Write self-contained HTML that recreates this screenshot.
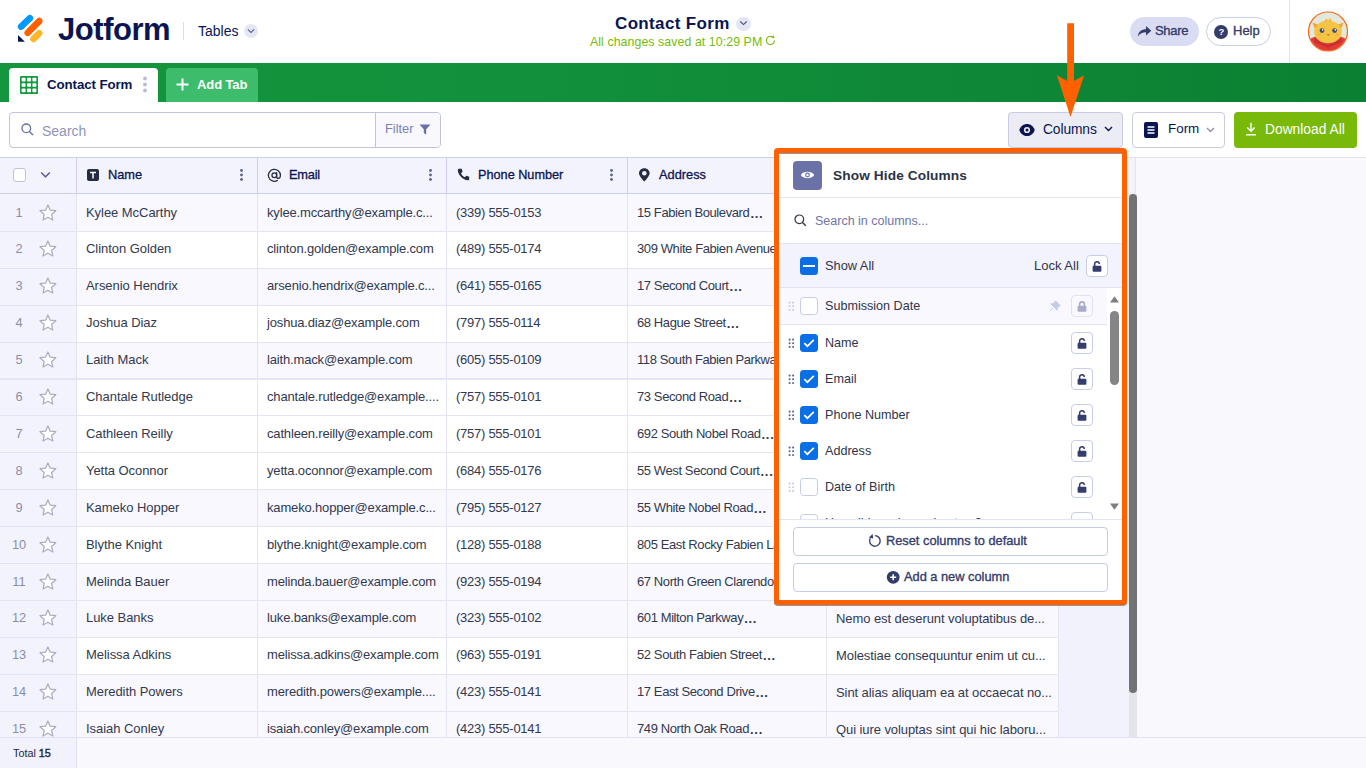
<!DOCTYPE html>
<html><head><meta charset="utf-8">
<style>
*{box-sizing:border-box;margin:0;padding:0}
html,body{width:1366px;height:768px;overflow:hidden;background:#fff;font-family:"Liberation Sans",sans-serif;color:#0a1551}
.abs{position:absolute}
.t{position:absolute;white-space:nowrap;line-height:1}
/* header */
#hdr{position:absolute;left:0;top:0;width:1366px;height:63px;background:#fff}
#green{position:absolute;left:0;top:63px;width:1366px;height:39px;background:linear-gradient(90deg,#15953d 0%,#12903b 40%,#0b8032 100%)}
.tab{position:absolute;top:68px;height:34px;border-radius:4px 4px 0 0}
/* toolbar */
.btn{position:absolute;border-radius:4px}
/* table */
#thead{position:absolute;left:0;top:157px;width:1059px;height:37px;background:#f3f3fd;border-top:1px solid #cdd0ec;border-bottom:1.5px solid #cdd0ec}
.hc{position:absolute;top:0;height:35px}
.vsep{position:absolute;width:1px;background:#dfe1f3}
.row{position:absolute;left:0;width:1058px;border-bottom:1px solid #e3e5f4}
.c0{position:absolute;left:0;top:0;width:77px;height:100%;background:#f3f3fd;border-right:1px solid #e0e2f3}
.num{position:absolute;left:0;width:38px;text-align:center;font-size:12.8px;color:#8a8fa9;line-height:13px}
.star{position:absolute;left:39px;top:10px}
.cell{position:absolute;top:0;height:100%;font-size:13px;letter-spacing:-0.12px;color:#33394e;line-height:13px;white-space:nowrap;overflow:hidden;border-right:1px solid #e3e5f4}
.tx{position:absolute;left:9px}
.el{letter-spacing:0.7px;position:relative;top:1px;margin-left:1px;font-weight:bold}
/* panel */
#frame{position:absolute;left:774px;top:148px;width:353px;height:457px;border:5px solid #ff6100;border-radius:4px;background:#fff;box-shadow:0 1px 0 rgba(70,70,90,0.55)}
.pt{position:absolute;white-space:nowrap;line-height:1;color:#2f3549}
.cb{position:absolute;width:18px;height:18px;border-radius:3.5px}
.cbon{background:#0a6fe5}
.cboff{background:#fff;border:1px solid #c6cbe9}
.lockb{position:absolute;width:22px;height:22px;border:1px solid #c8cdec;border-radius:4px;background:#fff}
.drag{position:absolute;width:7px;height:10px}
</style></head><body>

<!-- ============ HEADER ============ -->
<div id="hdr">
  <svg class="abs" style="left:14px;top:12px" width="34" height="34" viewBox="0 0 34 34">
    <path d="M15.9 6.2 L7.1 14.6" stroke="#0099ff" stroke-width="6.6" stroke-linecap="round"/>
    <path d="M25.2 9.1 L13.7 20.8" stroke="#ff6100" stroke-width="6.6" stroke-linecap="round"/>
    <path d="M25.2 21.2 L19.5 27" stroke="#ffb629" stroke-width="6.6" stroke-linecap="round"/>
    <path d="M4 23 L4 29.7 L10.9 29.7 Z" fill="#0a1551"/>
  </svg>
  <div class="t" style="left:58px;top:14px;font-size:31px;font-weight:bold;letter-spacing:-0.45px;color:#0a1551">Jotform</div>
  <div class="abs" style="left:183px;top:22px;width:1px;height:18px;background:#d8dbf0"></div>
  <div class="t" style="left:198px;top:24px;font-size:14px;color:#0a1551">Tables</div>
  <div class="abs" style="left:244px;top:24px;width:14px;height:14px;border-radius:50%;background:#e4e6f5"></div>
  <svg class="abs" style="left:247px;top:28px" width="8" height="6" viewBox="0 0 8 6"><path d="M0.8 1.3 L4 4.5 L7.2 1.3" fill="none" stroke="#5a6190" stroke-width="1.1"/></svg>

  <div class="t" style="left:615px;top:15px;font-size:17px;font-weight:bold;letter-spacing:0.35px;color:#0a1551">Contact Form</div>
  <div class="abs" style="left:736px;top:17px;width:15px;height:14px;border-radius:50%;background:#e4e6f5"></div>
  <svg class="abs" style="left:739px;top:20px" width="9" height="6" viewBox="0 0 9 6"><path d="M1.3 1.5 L4.5 4.6 L7.7 1.5" fill="none" stroke="#4a5070" stroke-width="1.1"/></svg>
  <div class="t" style="left:590px;top:36px;font-size:12.4px;letter-spacing:0.05px;color:#78bb0a">All changes saved at 10:29 PM</div>
  <svg class="abs" style="left:765px;top:35px" width="11" height="11" viewBox="0 0 11 11"><path d="M9.5 5.4 A4.1 4.1 0 1 1 7.45 1.85" fill="none" stroke="#78bb0a" stroke-width="1.1"/><path d="M8.9 0.2 L9.3 3.4 L6.2 2.6Z" fill="#78bb0a"/></svg>

  <div class="abs" style="left:1130px;top:17px;width:69px;height:29px;border-radius:14.5px;background:#dadcf3"></div>
  <svg class="abs" style="left:1137px;top:25px" width="15" height="12" viewBox="0 0 15 12"><path d="M0.8 11.5 C1.5 6.5 4.5 4.2 9 4.2 L9 1 L14.3 5.8 L9 10.4 L9 7.2 C5.4 7.2 3 8.4 0.8 11.5Z" fill="#343c6a"/></svg>
  <div class="t" style="left:1155px;top:24px;font-size:13px;letter-spacing:-0.3px;color:#343c6a;-webkit-text-stroke:0.35px #343c6a">Share</div>
  <div class="abs" style="left:1206px;top:17px;width:65px;height:29px;border-radius:14.5px;border:1px solid #c9cdef;background:#fff"></div>
  <div class="abs" style="left:1214px;top:24.5px;width:14px;height:14px;border-radius:50%;background:#343c6a"></div>
  <div class="t" style="left:1214.5px;top:26.5px;width:14px;text-align:center;font-size:9.5px;font-weight:bold;color:#fff">?</div>
  <div class="t" style="left:1233px;top:24px;font-size:13px;letter-spacing:0px;color:#343c6a;-webkit-text-stroke:0.35px #343c6a">Help</div>
  <div class="abs" style="left:1289px;top:0;width:1px;height:63px;background:#e1e3f4"></div>
  <svg class="abs" style="left:1307px;top:11px" width="42" height="42" viewBox="0 0 42 42">
    <defs><clipPath id="avc"><circle cx="21" cy="20.5" r="19.5"/></clipPath></defs>
    <circle cx="21" cy="20.5" r="19.5" fill="#e4e8dc"/>
    <g clip-path="url(#avc)">
      <path d="M0 42 L1 30 Q4 26 10 25.5 L32 25.5 Q38 26 41 30 L42 42Z" fill="#e23b3a"/>
      <path d="M8 27 L21 34 L34 27 L35 31 L21 37 L7 31Z" fill="#c92f2e"/>
      <path d="M5.5 11.5 L13 14.5 L9 21Z" fill="#f0a238"/>
      <path d="M36.5 11.5 L29 14.5 L33 21Z" fill="#f0a238"/>
      <ellipse cx="21" cy="21" rx="13.8" ry="11.2" fill="#f6c445"/>
      <path d="M17 10.5 L19.5 7.5 L21 10 L23 7 L25 10.5Z" fill="#f3b73c"/>
      <circle cx="15" cy="19.6" r="2.4" fill="#3f4a6e"/>
      <circle cx="27.6" cy="19.6" r="2.4" fill="#3f4a6e"/>
      <circle cx="15.7" cy="18.9" r="0.8" fill="#fff"/>
      <circle cx="28.3" cy="18.9" r="0.8" fill="#fff"/>
      <path d="M19.6 23.6 Q21.3 25.6 23 23.6Z" fill="#9a4a22"/>
      <ellipse cx="12" cy="23.5" rx="1.8" ry="1" fill="#f2a54a" opacity="0.7"/>
      <ellipse cx="30.5" cy="23.5" rx="1.8" ry="1" fill="#f2a54a" opacity="0.7"/>
    </g>
    <circle cx="21" cy="20.5" r="19.5" fill="none" stroke="#f26a1b" stroke-width="1.2"/>
  </svg>
</div>

<!-- ============ GREEN BAR ============ -->
<div id="green"></div>
<div class="tab" style="left:9px;width:149px;background:#fff"></div>
<svg class="abs" style="left:20px;top:76px" width="18" height="18" viewBox="0 0 18 18">
  <rect x="0" y="0" width="18" height="18" rx="1" fill="#149a3f"/>
  <g fill="#fff">
    <rect x="1.6" y="1.8" width="4" height="3.6" rx="0.8"/><rect x="7" y="1.8" width="4" height="3.6" rx="0.8"/><rect x="12.4" y="1.8" width="4" height="3.6" rx="0.8"/>
    <rect x="1.6" y="7.2" width="4" height="3.6" rx="0.8"/><rect x="7" y="7.2" width="4" height="3.6" rx="0.8"/><rect x="12.4" y="7.2" width="4" height="3.6" rx="0.8"/>
    <rect x="1.6" y="12.6" width="4" height="3.6" rx="0.8"/><rect x="7" y="12.6" width="4" height="3.6" rx="0.8"/><rect x="12.4" y="12.6" width="4" height="3.6" rx="0.8"/>
  </g>
</svg>
<div class="t" style="left:47px;top:78px;font-size:13.3px;font-weight:bold;letter-spacing:-0.1px;color:#0a1551">Contact Form</div>
<svg class="abs" style="left:142px;top:76px" width="6" height="18" viewBox="0 0 6 18"><circle cx="3" cy="2.5" r="1.9" fill="#b9bbd3"/><circle cx="3" cy="8.5" r="1.9" fill="#b9bbd3"/><circle cx="3" cy="14.5" r="1.9" fill="#b9bbd3"/></svg>
<div class="tab" style="left:166px;width:92px;background:#3dbd6b"></div>
<svg class="abs" style="left:176px;top:78px" width="13" height="13" viewBox="0 0 13 13"><path d="M6.5 0.5 V12.5 M0.5 6.5 H12.5" stroke="#fff" stroke-width="2"/></svg>
<div class="t" style="left:197px;top:78px;font-size:13px;font-weight:bold;letter-spacing:-0.1px;color:#fff">Add Tab</div>

<!-- ============ TOOLBAR ============ -->
<div class="abs" style="left:9px;top:112px;width:432px;height:36px;border:1.3px solid #bfc3dc;border-radius:4px;background:#fff;overflow:hidden">
  <div class="abs" style="left:365px;top:0;width:67px;height:36px;background:#f9f9fd;border-left:1.3px solid #bfc3dc"></div>
</div>
<svg class="abs" style="left:21px;top:123px" width="13" height="13" viewBox="0 0 13 13"><circle cx="5.3" cy="5.3" r="4.3" fill="none" stroke="#6b71a0" stroke-width="1.3"/><path d="M8.4 8.4 L12 12" stroke="#6b71a0" stroke-width="1.4"/></svg>
<div class="t" style="left:42px;top:124px;font-size:14px;color:#8f94b8">Search</div>
<div class="t" style="left:385px;top:123px;font-size:12.8px;color:#7a82b2">Filter</div>
<svg class="abs" style="left:419px;top:124px" width="12" height="11" viewBox="0 0 12 11"><path d="M0.5 0.5 H11.5 L7.2 5.2 V10.5 L4.8 9 V5.2Z" fill="#6a70a8"/></svg>

<div class="abs" style="left:1008px;top:112px;width:115px;height:36px;border:1px solid #c9cbe0;border-radius:4px;background:#ececf4"></div>
<svg class="abs" style="left:1019px;top:124px" width="16" height="12" viewBox="0 0 16 12"><path d="M0.3 6 C3 -2 13 -2 15.7 6 C13 14 3 14 0.3 6Z" fill="#0a1551"/><circle cx="8" cy="6" r="3.1" fill="#ececf4"/><circle cx="8" cy="6" r="1.5" fill="#0a1551"/></svg>
<div class="t" style="left:1043px;top:123px;font-size:13.8px;letter-spacing:-0.1px;color:#0a1551">Columns</div>
<svg class="abs" style="left:1104px;top:126px" width="9" height="6" viewBox="0 0 9 6"><path d="M1 1 L4.5 4.5 L8 1" fill="none" stroke="#0a1551" stroke-width="1.4"/></svg>

<div class="abs" style="left:1132px;top:112px;width:93px;height:36px;border:1px solid #c9cbe0;border-radius:4px;background:#fff"></div>
<svg class="abs" style="left:1144px;top:122px" width="14" height="16" viewBox="0 0 14 16"><rect x="0" y="0" width="14" height="16" rx="2" fill="#0a1551"/><path d="M3.5 5 H10.5 M3.5 8 H10.5 M3.5 11 H10.5" stroke="#fff" stroke-width="1.4"/></svg>
<div class="t" style="left:1168px;top:122px;font-size:13.4px;color:#0a1551">Form</div>
<svg class="abs" style="left:1206px;top:127px" width="9" height="6" viewBox="0 0 9 6"><path d="M1 1 L4.5 4.5 L8 1" fill="none" stroke="#8a8fb0" stroke-width="1.3"/></svg>

<div class="abs" style="left:1234px;top:112px;width:123px;height:36px;border-radius:4px;background:#78b90a"></div>
<svg class="abs" style="left:1245px;top:122px" width="12" height="14" viewBox="0 0 12 14"><path d="M6 0.8 V9 M2.3 5.5 L6 9.2 L9.7 5.5 M1 12.8 H11" fill="none" stroke="#fff" stroke-width="1.4"/></svg>
<div class="t" style="left:1265px;top:123px;font-size:13.8px;color:#fff">Download All</div>

<!-- ============ TABLE ============ -->
<div class="abs" style="left:1136px;top:157px;width:230px;height:611px;background:#f8f8fd;border-top:1px solid #dfe1f3"></div>
<div class="abs" style="left:1058px;top:194px;width:71px;height:543px;background:#f1f2fb"></div>
<div class="abs" style="left:1059px;top:157px;width:77px;height:37px;background:#f3f3fd;border-top:1px solid #e0e3f5;border-right:1px solid #e0e3f5;border-bottom:1px solid #eceef8"></div>
<div id="thead">
  <div class="hc" style="left:0;width:77px;border-right:1px solid #cdd0ec"></div>
  <div class="hc" style="left:77px;width:181px;border-right:1px solid #cdd0ec"></div>
  <div class="hc" style="left:258px;width:189px;border-right:1px solid #cdd0ec"></div>
  <div class="hc" style="left:447px;width:181px;border-right:1px solid #cdd0ec"></div>
  <div class="hc" style="left:628px;width:199px;border-right:1px solid #cdd0ec"></div>
  <div class="hc" style="left:827px;width:232px;border-right:1px solid #cdd0ec"></div>
  
</div>
<div class="abs" style="left:13px;top:168px;width:13px;height:14px;border:1px solid #bfc3dd;border-radius:3px;background:#fff"></div>
<svg class="abs" style="left:40px;top:171px" width="11" height="8" viewBox="0 0 11 8"><path d="M1.2 1.5 L5.5 5.8 L9.8 1.5" fill="none" stroke="#5e6496" stroke-width="1.6"/></svg>
<svg class="abs" style="left:87px;top:169px" width="12" height="12" viewBox="0 0 12 12"><rect width="12" height="12" rx="2" fill="#262b42"/><path d="M3 3.4 H9 M6 3.4 V9.6" stroke="#fff" stroke-width="1.5"/></svg>
<div class="t" style="left:108px;top:169px;font-size:12.8px;color:#0a1551;-webkit-text-stroke:0.3px #0a1551">Name</div>
<svg class="abs" style="left:239px;top:168px" width="5" height="14" viewBox="0 0 5 14"><circle cx="2.5" cy="2.5" r="1.45" fill="#5e6496"/><circle cx="2.5" cy="7" r="1.45" fill="#5e6496"/><circle cx="2.5" cy="11.5" r="1.45" fill="#5e6496"/></svg>
<svg class="abs" style="left:267px;top:168px" width="15" height="15" viewBox="0 0 15 15"><circle cx="7.3" cy="7.3" r="2.35" fill="none" stroke="#262b42" stroke-width="1.3"/><path d="M9.65 4.6 V8.4 Q9.65 10.3 11.4 10.3 Q13.4 10.3 13.4 7.3 A6 6 0 1 0 10.4 12.5" fill="none" stroke="#262b42" stroke-width="1.3" stroke-linecap="round"/></svg>
<div class="t" style="left:289px;top:169px;font-size:12.8px;color:#0a1551;letter-spacing:-0.2px;-webkit-text-stroke:0.3px #0a1551">Email</div>
<svg class="abs" style="left:428px;top:168px" width="5" height="14" viewBox="0 0 5 14"><circle cx="2.5" cy="2.5" r="1.45" fill="#5e6496"/><circle cx="2.5" cy="7" r="1.45" fill="#5e6496"/><circle cx="2.5" cy="11.5" r="1.45" fill="#5e6496"/></svg>
<svg class="abs" style="left:457px;top:168px" width="13" height="13" viewBox="0 0 13 13"><path d="M2.2 0.8 L4.6 0.8 L5.6 3.8 L4 5.3 C4.8 7.2 6 8.5 7.8 9.3 L9.3 7.7 L12.2 8.7 L12.2 11.2 C12.2 11.9 11.6 12.4 10.9 12.3 C5.8 11.8 1.3 7.3 0.8 2.2 C0.7 1.4 1.3 0.8 2.2 0.8Z" fill="#262b42"/></svg>
<div class="t" style="left:478px;top:169px;font-size:12.7px;color:#0a1551;-webkit-text-stroke:0.3px #0a1551">Phone Number</div>
<svg class="abs" style="left:609px;top:168px" width="5" height="14" viewBox="0 0 5 14"><circle cx="2.5" cy="2.5" r="1.45" fill="#5e6496"/><circle cx="2.5" cy="7" r="1.45" fill="#5e6496"/><circle cx="2.5" cy="11.5" r="1.45" fill="#5e6496"/></svg>
<svg class="abs" style="left:639px;top:168px" width="11" height="14" viewBox="0 0 11 14"><path d="M5.3 0.3 C8.3 0.3 10.6 2.5 10.6 5.3 C10.6 8.3 5.3 13.6 5.3 13.6 C5.3 13.6 0 8.3 0 5.3 C0 2.5 2.3 0.3 5.3 0.3Z" fill="#262b42"/><circle cx="5.3" cy="5.2" r="2.3" fill="#f3f3fd"/></svg>
<div class="t" style="left:659px;top:169px;font-size:12.8px;color:#0a1551;-webkit-text-stroke:0.3px #0a1551">Address</div>

<div id="rows">
<div class="row" style="top:194px;height:38px;background:#f8f8fe;border-bottom-width:1px"><div class="c0"><span class="num" style="top:12px">1</span><svg class="star" style="top:10px" width="18" height="18" viewBox="0 0 18 18"><path d="M8.90 1.00 L11.19 6.14 L16.79 6.74 L12.61 10.51 L13.78 16.01 L8.90 13.20 L4.02 16.01 L5.19 10.51 L1.01 6.74 L6.61 6.14Z" fill="#fff" stroke="#aaadc5" stroke-width="1.25" stroke-linejoin="round"/></svg></div><div class="cell" style="left:77px;width:181px;letter-spacing:-0.05px"><span class="tx" style="top:12px">Kylee McCarthy</span></div><div class="cell" style="left:258px;width:189px;letter-spacing:-0.16px"><span class="tx" style="top:12px">kylee.mccarthy@example.c...</span></div><div class="cell" style="left:447px;width:181px;letter-spacing:-0.26px"><span class="tx" style="top:12px">(339) 555-0153</span></div><div class="cell" style="left:628px;width:199px;letter-spacing:-0.4px"><span class="tx" style="top:12px">15 Fabien Boulevard<span class="el">...</span></span></div><div class="cell" style="left:827px;width:232px;letter-spacing:-0.08px"><span class="tx" style="top:13px"></span></div></div>
<div class="row" style="top:232px;height:37px;background:#ffffff;border-bottom-width:1px"><div class="c0"><span class="num" style="top:10px">2</span><svg class="star" style="top:8px" width="18" height="18" viewBox="0 0 18 18"><path d="M8.90 1.00 L11.19 6.14 L16.79 6.74 L12.61 10.51 L13.78 16.01 L8.90 13.20 L4.02 16.01 L5.19 10.51 L1.01 6.74 L6.61 6.14Z" fill="#fff" stroke="#aaadc5" stroke-width="1.25" stroke-linejoin="round"/></svg></div><div class="cell" style="left:77px;width:181px;letter-spacing:-0.05px"><span class="tx" style="top:10px">Clinton Golden</span></div><div class="cell" style="left:258px;width:189px;letter-spacing:-0.16px"><span class="tx" style="top:10px">clinton.golden@example.com</span></div><div class="cell" style="left:447px;width:181px;letter-spacing:-0.26px"><span class="tx" style="top:10px">(489) 555-0174</span></div><div class="cell" style="left:628px;width:199px;letter-spacing:-0.4px"><span class="tx" style="top:10px">309 White Fabien Avenue</span></div><div class="cell" style="left:827px;width:232px;letter-spacing:-0.08px"><span class="tx" style="top:11px"></span></div></div>
<div class="row" style="top:269px;height:37px;background:#f8f8fe;border-bottom-width:1px"><div class="c0"><span class="num" style="top:10px">3</span><svg class="star" style="top:8px" width="18" height="18" viewBox="0 0 18 18"><path d="M8.90 1.00 L11.19 6.14 L16.79 6.74 L12.61 10.51 L13.78 16.01 L8.90 13.20 L4.02 16.01 L5.19 10.51 L1.01 6.74 L6.61 6.14Z" fill="#fff" stroke="#aaadc5" stroke-width="1.25" stroke-linejoin="round"/></svg></div><div class="cell" style="left:77px;width:181px;letter-spacing:-0.05px"><span class="tx" style="top:10px">Arsenio Hendrix</span></div><div class="cell" style="left:258px;width:189px;letter-spacing:-0.16px"><span class="tx" style="top:10px">arsenio.hendrix@example.c...</span></div><div class="cell" style="left:447px;width:181px;letter-spacing:-0.26px"><span class="tx" style="top:10px">(641) 555-0165</span></div><div class="cell" style="left:628px;width:199px;letter-spacing:-0.4px"><span class="tx" style="top:10px">17 Second Court<span class="el">...</span></span></div><div class="cell" style="left:827px;width:232px;letter-spacing:-0.08px"><span class="tx" style="top:11px"></span></div></div>
<div class="row" style="top:306px;height:37px;background:#ffffff;border-bottom-width:1px"><div class="c0"><span class="num" style="top:10px">4</span><svg class="star" style="top:8px" width="18" height="18" viewBox="0 0 18 18"><path d="M8.90 1.00 L11.19 6.14 L16.79 6.74 L12.61 10.51 L13.78 16.01 L8.90 13.20 L4.02 16.01 L5.19 10.51 L1.01 6.74 L6.61 6.14Z" fill="#fff" stroke="#aaadc5" stroke-width="1.25" stroke-linejoin="round"/></svg></div><div class="cell" style="left:77px;width:181px;letter-spacing:-0.05px"><span class="tx" style="top:10px">Joshua Diaz</span></div><div class="cell" style="left:258px;width:189px;letter-spacing:-0.16px"><span class="tx" style="top:10px">joshua.diaz@example.com</span></div><div class="cell" style="left:447px;width:181px;letter-spacing:-0.26px"><span class="tx" style="top:10px">(797) 555-0114</span></div><div class="cell" style="left:628px;width:199px;letter-spacing:-0.4px"><span class="tx" style="top:10px">68 Hague Street<span class="el">...</span></span></div><div class="cell" style="left:827px;width:232px;letter-spacing:-0.08px"><span class="tx" style="top:11px"></span></div></div>
<div class="row" style="top:343px;height:37px;background:#f8f8fe;border-bottom-width:2px"><div class="c0"><span class="num" style="top:10px">5</span><svg class="star" style="top:8px" width="18" height="18" viewBox="0 0 18 18"><path d="M8.90 1.00 L11.19 6.14 L16.79 6.74 L12.61 10.51 L13.78 16.01 L8.90 13.20 L4.02 16.01 L5.19 10.51 L1.01 6.74 L6.61 6.14Z" fill="#fff" stroke="#aaadc5" stroke-width="1.25" stroke-linejoin="round"/></svg></div><div class="cell" style="left:77px;width:181px;letter-spacing:-0.05px"><span class="tx" style="top:10px">Laith Mack</span></div><div class="cell" style="left:258px;width:189px;letter-spacing:-0.16px"><span class="tx" style="top:10px">laith.mack@example.com</span></div><div class="cell" style="left:447px;width:181px;letter-spacing:-0.26px"><span class="tx" style="top:10px">(605) 555-0109</span></div><div class="cell" style="left:628px;width:199px;letter-spacing:-0.4px"><span class="tx" style="top:10px">118 South Fabien Parkway</span></div><div class="cell" style="left:827px;width:232px;letter-spacing:-0.08px"><span class="tx" style="top:11px"></span></div></div>
<div class="row" style="top:380px;height:36px;background:#ffffff;border-bottom-width:1px"><div class="c0"><span class="num" style="top:10px">6</span><svg class="star" style="top:8px" width="18" height="18" viewBox="0 0 18 18"><path d="M8.90 1.00 L11.19 6.14 L16.79 6.74 L12.61 10.51 L13.78 16.01 L8.90 13.20 L4.02 16.01 L5.19 10.51 L1.01 6.74 L6.61 6.14Z" fill="#fff" stroke="#aaadc5" stroke-width="1.25" stroke-linejoin="round"/></svg></div><div class="cell" style="left:77px;width:181px;letter-spacing:-0.05px"><span class="tx" style="top:10px">Chantale Rutledge</span></div><div class="cell" style="left:258px;width:189px;letter-spacing:-0.16px"><span class="tx" style="top:10px">chantale.rutledge@example....</span></div><div class="cell" style="left:447px;width:181px;letter-spacing:-0.26px"><span class="tx" style="top:10px">(757) 555-0101</span></div><div class="cell" style="left:628px;width:199px;letter-spacing:-0.4px"><span class="tx" style="top:10px">73 Second Road<span class="el">...</span></span></div><div class="cell" style="left:827px;width:232px;letter-spacing:-0.08px"><span class="tx" style="top:11px"></span></div></div>
<div class="row" style="top:416px;height:37px;background:#ffffff;border-bottom-width:1px"><div class="c0"><span class="num" style="top:11px">7</span><svg class="star" style="top:9px" width="18" height="18" viewBox="0 0 18 18"><path d="M8.90 1.00 L11.19 6.14 L16.79 6.74 L12.61 10.51 L13.78 16.01 L8.90 13.20 L4.02 16.01 L5.19 10.51 L1.01 6.74 L6.61 6.14Z" fill="#fff" stroke="#aaadc5" stroke-width="1.25" stroke-linejoin="round"/></svg></div><div class="cell" style="left:77px;width:181px;letter-spacing:-0.05px"><span class="tx" style="top:11px">Cathleen Reilly</span></div><div class="cell" style="left:258px;width:189px;letter-spacing:-0.16px"><span class="tx" style="top:11px">cathleen.reilly@example.com</span></div><div class="cell" style="left:447px;width:181px;letter-spacing:-0.26px"><span class="tx" style="top:11px">(757) 555-0101</span></div><div class="cell" style="left:628px;width:199px;letter-spacing:-0.4px"><span class="tx" style="top:11px">692 South Nobel Road<span class="el">...</span></span></div><div class="cell" style="left:827px;width:232px;letter-spacing:-0.08px"><span class="tx" style="top:12px"></span></div></div>
<div class="row" style="top:453px;height:37px;background:#ffffff;border-bottom-width:1px"><div class="c0"><span class="num" style="top:11px">8</span><svg class="star" style="top:9px" width="18" height="18" viewBox="0 0 18 18"><path d="M8.90 1.00 L11.19 6.14 L16.79 6.74 L12.61 10.51 L13.78 16.01 L8.90 13.20 L4.02 16.01 L5.19 10.51 L1.01 6.74 L6.61 6.14Z" fill="#fff" stroke="#aaadc5" stroke-width="1.25" stroke-linejoin="round"/></svg></div><div class="cell" style="left:77px;width:181px;letter-spacing:-0.05px"><span class="tx" style="top:11px">Yetta Oconnor</span></div><div class="cell" style="left:258px;width:189px;letter-spacing:-0.16px"><span class="tx" style="top:11px">yetta.oconnor@example.com</span></div><div class="cell" style="left:447px;width:181px;letter-spacing:-0.26px"><span class="tx" style="top:11px">(684) 555-0176</span></div><div class="cell" style="left:628px;width:199px;letter-spacing:-0.4px"><span class="tx" style="top:11px">55 West Second Court<span class="el">...</span></span></div><div class="cell" style="left:827px;width:232px;letter-spacing:-0.08px"><span class="tx" style="top:12px"></span></div></div>
<div class="row" style="top:490px;height:37px;background:#f8f8fe;border-bottom-width:1px"><div class="c0"><span class="num" style="top:11px">9</span><svg class="star" style="top:9px" width="18" height="18" viewBox="0 0 18 18"><path d="M8.90 1.00 L11.19 6.14 L16.79 6.74 L12.61 10.51 L13.78 16.01 L8.90 13.20 L4.02 16.01 L5.19 10.51 L1.01 6.74 L6.61 6.14Z" fill="#fff" stroke="#aaadc5" stroke-width="1.25" stroke-linejoin="round"/></svg></div><div class="cell" style="left:77px;width:181px;letter-spacing:-0.05px"><span class="tx" style="top:11px">Kameko Hopper</span></div><div class="cell" style="left:258px;width:189px;letter-spacing:-0.16px"><span class="tx" style="top:11px">kameko.hopper@example.c...</span></div><div class="cell" style="left:447px;width:181px;letter-spacing:-0.26px"><span class="tx" style="top:11px">(795) 555-0127</span></div><div class="cell" style="left:628px;width:199px;letter-spacing:-0.4px"><span class="tx" style="top:11px">55 White Nobel Road<span class="el">...</span></span></div><div class="cell" style="left:827px;width:232px;letter-spacing:-0.08px"><span class="tx" style="top:12px"></span></div></div>
<div class="row" style="top:527px;height:37px;background:#ffffff;border-bottom-width:1px"><div class="c0"><span class="num" style="top:11px">10</span><svg class="star" style="top:9px" width="18" height="18" viewBox="0 0 18 18"><path d="M8.90 1.00 L11.19 6.14 L16.79 6.74 L12.61 10.51 L13.78 16.01 L8.90 13.20 L4.02 16.01 L5.19 10.51 L1.01 6.74 L6.61 6.14Z" fill="#fff" stroke="#aaadc5" stroke-width="1.25" stroke-linejoin="round"/></svg></div><div class="cell" style="left:77px;width:181px;letter-spacing:-0.05px"><span class="tx" style="top:11px">Blythe Knight</span></div><div class="cell" style="left:258px;width:189px;letter-spacing:-0.16px"><span class="tx" style="top:11px">blythe.knight@example.com</span></div><div class="cell" style="left:447px;width:181px;letter-spacing:-0.26px"><span class="tx" style="top:11px">(128) 555-0188</span></div><div class="cell" style="left:628px;width:199px;letter-spacing:-0.4px"><span class="tx" style="top:11px">805 East Rocky Fabien Lane</span></div><div class="cell" style="left:827px;width:232px;letter-spacing:-0.08px"><span class="tx" style="top:12px"></span></div></div>
<div class="row" style="top:564px;height:37px;background:#f8f8fe;border-bottom-width:1px"><div class="c0"><span class="num" style="top:11px">11</span><svg class="star" style="top:9px" width="18" height="18" viewBox="0 0 18 18"><path d="M8.90 1.00 L11.19 6.14 L16.79 6.74 L12.61 10.51 L13.78 16.01 L8.90 13.20 L4.02 16.01 L5.19 10.51 L1.01 6.74 L6.61 6.14Z" fill="#fff" stroke="#aaadc5" stroke-width="1.25" stroke-linejoin="round"/></svg></div><div class="cell" style="left:77px;width:181px;letter-spacing:-0.05px"><span class="tx" style="top:11px">Melinda Bauer</span></div><div class="cell" style="left:258px;width:189px;letter-spacing:-0.16px"><span class="tx" style="top:11px">melinda.bauer@example.com</span></div><div class="cell" style="left:447px;width:181px;letter-spacing:-0.26px"><span class="tx" style="top:11px">(923) 555-0194</span></div><div class="cell" style="left:628px;width:199px;letter-spacing:-0.4px"><span class="tx" style="top:11px">67 North Green Clarendon</span></div><div class="cell" style="left:827px;width:232px;letter-spacing:-0.08px"><span class="tx" style="top:12px"></span></div></div>
<div class="row" style="top:601px;height:37px;background:#f8f8fe;border-bottom-width:1px"><div class="c0"><span class="num" style="top:10px">12</span><svg class="star" style="top:8px" width="18" height="18" viewBox="0 0 18 18"><path d="M8.90 1.00 L11.19 6.14 L16.79 6.74 L12.61 10.51 L13.78 16.01 L8.90 13.20 L4.02 16.01 L5.19 10.51 L1.01 6.74 L6.61 6.14Z" fill="#fff" stroke="#aaadc5" stroke-width="1.25" stroke-linejoin="round"/></svg></div><div class="cell" style="left:77px;width:181px;letter-spacing:-0.05px"><span class="tx" style="top:10px">Luke Banks</span></div><div class="cell" style="left:258px;width:189px;letter-spacing:-0.16px"><span class="tx" style="top:10px">luke.banks@example.com</span></div><div class="cell" style="left:447px;width:181px;letter-spacing:-0.26px"><span class="tx" style="top:10px">(323) 555-0102</span></div><div class="cell" style="left:628px;width:199px;letter-spacing:-0.4px"><span class="tx" style="top:10px">601 Milton Parkway<span class="el">...</span></span></div><div class="cell" style="left:827px;width:232px;letter-spacing:-0.08px"><span class="tx" style="top:11px">Nemo est deserunt voluptatibus de...</span></div></div>
<div class="row" style="top:638px;height:37px;background:#ffffff;border-bottom-width:1px"><div class="c0"><span class="num" style="top:10px">13</span><svg class="star" style="top:8px" width="18" height="18" viewBox="0 0 18 18"><path d="M8.90 1.00 L11.19 6.14 L16.79 6.74 L12.61 10.51 L13.78 16.01 L8.90 13.20 L4.02 16.01 L5.19 10.51 L1.01 6.74 L6.61 6.14Z" fill="#fff" stroke="#aaadc5" stroke-width="1.25" stroke-linejoin="round"/></svg></div><div class="cell" style="left:77px;width:181px;letter-spacing:-0.05px"><span class="tx" style="top:10px">Melissa Adkins</span></div><div class="cell" style="left:258px;width:189px;letter-spacing:-0.16px"><span class="tx" style="top:10px">melissa.adkins@example.com</span></div><div class="cell" style="left:447px;width:181px;letter-spacing:-0.26px"><span class="tx" style="top:10px">(963) 555-0191</span></div><div class="cell" style="left:628px;width:199px;letter-spacing:-0.4px"><span class="tx" style="top:10px">52 South Fabien Street<span class="el">...</span></span></div><div class="cell" style="left:827px;width:232px;letter-spacing:-0.08px"><span class="tx" style="top:11px">Molestiae consequuntur enim ut cu...</span></div></div>
<div class="row" style="top:675px;height:37px;background:#f8f8fe;border-bottom-width:1px"><div class="c0"><span class="num" style="top:10px">14</span><svg class="star" style="top:8px" width="18" height="18" viewBox="0 0 18 18"><path d="M8.90 1.00 L11.19 6.14 L16.79 6.74 L12.61 10.51 L13.78 16.01 L8.90 13.20 L4.02 16.01 L5.19 10.51 L1.01 6.74 L6.61 6.14Z" fill="#fff" stroke="#aaadc5" stroke-width="1.25" stroke-linejoin="round"/></svg></div><div class="cell" style="left:77px;width:181px;letter-spacing:-0.05px"><span class="tx" style="top:10px">Meredith Powers</span></div><div class="cell" style="left:258px;width:189px;letter-spacing:-0.16px"><span class="tx" style="top:10px">meredith.powers@example....</span></div><div class="cell" style="left:447px;width:181px;letter-spacing:-0.26px"><span class="tx" style="top:10px">(423) 555-0141</span></div><div class="cell" style="left:628px;width:199px;letter-spacing:-0.4px"><span class="tx" style="top:10px">17 East Second Drive<span class="el">...</span></span></div><div class="cell" style="left:827px;width:232px;letter-spacing:-0.08px"><span class="tx" style="top:11px">Sint alias aliquam ea at occaecat no...</span></div></div>
<div class="row" style="top:712px;height:37px;background:#f8f8fe;border-bottom-width:1px"><div class="c0"><span class="num" style="top:10px">15</span><svg class="star" style="top:8px" width="18" height="18" viewBox="0 0 18 18"><path d="M8.90 1.00 L11.19 6.14 L16.79 6.74 L12.61 10.51 L13.78 16.01 L8.90 13.20 L4.02 16.01 L5.19 10.51 L1.01 6.74 L6.61 6.14Z" fill="#fff" stroke="#aaadc5" stroke-width="1.25" stroke-linejoin="round"/></svg></div><div class="cell" style="left:77px;width:181px;letter-spacing:-0.05px"><span class="tx" style="top:10px">Isaiah Conley</span></div><div class="cell" style="left:258px;width:189px;letter-spacing:-0.16px"><span class="tx" style="top:10px">isaiah.conley@example.com</span></div><div class="cell" style="left:447px;width:181px;letter-spacing:-0.26px"><span class="tx" style="top:10px">(423) 555-0141</span></div><div class="cell" style="left:628px;width:199px;letter-spacing:-0.4px"><span class="tx" style="top:10px">749 North Oak Road<span class="el">...</span></span></div><div class="cell" style="left:827px;width:232px;letter-spacing:-0.08px"><span class="tx" style="top:11px">Qui iure voluptas sint qui hic laboru...</span></div></div>
</div>

<!-- scrollbar -->
<div class="abs" style="left:1129px;top:194px;width:8px;height:543px;background:#e4e4ea"></div>
<div class="abs" style="left:1129px;top:194px;width:8px;height:499px;border-radius:4px;background:#737373"></div>

<!-- footer -->
<div class="abs" style="left:0;top:737px;width:1366px;height:31px;background:#f8f8fd;border-top:1px solid #e0e2f3"></div>
<div class="abs" style="left:0;top:738px;width:77px;height:30px;background:#f1f2fb;border-right:1px solid #e0e2f3"></div>
<div class="t" style="left:13px;top:748px;font-size:10.8px;color:#1f2540">Total <span style="-webkit-text-stroke:0.4px #1f2540">15</span></div>

<!-- ============ PANEL ============ -->
<div id="frame">
  <div class="abs" style="left:0;top:0;width:343px;height:1px;background:#3b3f55;opacity:0.55"></div>
</div>
<div class="abs" style="left:793px;top:161px;width:29px;height:29px;border-radius:4px;background:#6b72a8"></div>
<svg class="abs" style="left:800px;top:169px" width="15" height="12" viewBox="0 0 15 12"><path d="M0.8 6 C3 1.8 12 1.8 14.2 6 C12 10.2 3 10.2 0.8 6Z" fill="#fff"/><circle cx="7.5" cy="6" r="2.4" fill="#6b72a8"/><circle cx="7.5" cy="6" r="1.2" fill="#fff"/></svg>
<div class="pt" style="left:833px;top:169px;font-size:13.7px;font-weight:bold;color:#2b3245;letter-spacing:0.1px">Show Hide Columns</div>
<div class="abs" style="left:779px;top:197px;width:343px;height:1px;background:#e2e4f3"></div>
<svg class="abs" style="left:794px;top:214px" width="13" height="13" viewBox="0 0 13 13"><circle cx="5.3" cy="5.3" r="4.3" fill="none" stroke="#2b3245" stroke-width="1.2"/><path d="M8.3 8.3 L11.8 11.8" stroke="#2b3245" stroke-width="1.3"/></svg>
<div class="pt" style="left:815px;top:215px;font-size:12.5px;color:#6e75a8">Search in columns...</div>

<div class="abs" style="left:779px;top:243px;width:343px;height:45px;background:#f3f3fd;border-top:1px solid #e2e4f3;border-bottom:1px solid #e2e4f3"></div>
<div class="cb cbon" style="left:800px;top:257px"></div>
<div class="abs" style="left:803px;top:265px;width:12px;height:2px;background:#fff"></div>
<div class="pt" style="left:825px;top:260px;font-size:12.8px">Show All</div>
<div class="pt" style="left:1034px;top:259px;font-size:13px">Lock All</div>
<div class="lockb" style="left:1086px;top:255px"></div>

<!-- list -->
<div class="abs" style="left:779px;top:288px;width:328px;height:37px;background:#f8f8fe;border-bottom:1px solid #e2e4f3"></div>
<div class="abs" style="left:779px;top:519px;width:343px;height:1px;background:#e2e4f3"></div>
<svg class="abs" style="left:788px;top:301px" width="7" height="11" viewBox="0 0 7 11"><circle cx="1.6" cy="1.6" r="1.05" fill="#c9cbe0"/><circle cx="5.1" cy="1.6" r="1.05" fill="#c9cbe0"/><circle cx="1.6" cy="5.3" r="1.05" fill="#c9cbe0"/><circle cx="5.1" cy="5.3" r="1.05" fill="#c9cbe0"/><circle cx="1.6" cy="9.0" r="1.05" fill="#c9cbe0"/><circle cx="5.1" cy="9.0" r="1.05" fill="#c9cbe0"/></svg><div class="cb cboff" style="left:800px;top:297px"></div><div class="pt" style="left:825px;top:300px;font-size:12.6px">Submission Date</div><div class="lockb" style="left:1071px;top:295px;border-color:#dfe2f4;background:transparent"></div><svg class="abs" style="left:1077px;top:301px" width="10" height="11" viewBox="0 0 10 11"><path d="M2.6 5 V3.3 A2.4 2.4 0 0 1 7.4 3.3 V5" fill="none" stroke="#a9abc8" stroke-width="1.6"/><rect x="0.6" y="4.8" width="8.8" height="6" rx="1" fill="#a9abc8"/></svg><svg class="abs" style="left:1049px;top:300px" width="12" height="12" viewBox="0 0 12 12"><path d="M6.5 0.8 L11.2 5.5 L9.8 6.2 L8 8.8 L8.3 10.3 L1.7 3.7 L3.2 4 L5.8 2.2Z M4.2 7.8 L0.8 11.2" fill="#c5cbea" stroke="#c5cbea" stroke-width="1"/></svg><svg class="abs" style="left:788px;top:338px" width="7" height="11" viewBox="0 0 7 11"><circle cx="1.6" cy="1.6" r="1.05" fill="#5c6290"/><circle cx="5.1" cy="1.6" r="1.05" fill="#5c6290"/><circle cx="1.6" cy="5.3" r="1.05" fill="#5c6290"/><circle cx="5.1" cy="5.3" r="1.05" fill="#5c6290"/><circle cx="1.6" cy="9.0" r="1.05" fill="#5c6290"/><circle cx="5.1" cy="9.0" r="1.05" fill="#5c6290"/></svg><div class="cb cbon" style="left:800px;top:334px"></div><svg class="abs" style="left:800px;top:334px" width="18" height="18" viewBox="0 0 18 18"><path d="M4.3 9.2 L7.4 12.2 L13.8 5.8" fill="none" stroke="#fff" stroke-width="1.7"/></svg><div class="pt" style="left:825px;top:337px;font-size:12.6px">Name</div><div class="lockb" style="left:1071px;top:332px"></div><svg class="abs" style="left:1077px;top:338px" width="10" height="11" viewBox="0 0 10 11"><path d="M2.6 5 V3.3 A2.4 2.4 0 0 1 7.4 3.0" fill="none" stroke="#353d6e" stroke-width="1.6"/><rect x="0.6" y="4.8" width="8.8" height="6" rx="1" fill="#353d6e"/></svg><svg class="abs" style="left:788px;top:374px" width="7" height="11" viewBox="0 0 7 11"><circle cx="1.6" cy="1.6" r="1.05" fill="#5c6290"/><circle cx="5.1" cy="1.6" r="1.05" fill="#5c6290"/><circle cx="1.6" cy="5.3" r="1.05" fill="#5c6290"/><circle cx="5.1" cy="5.3" r="1.05" fill="#5c6290"/><circle cx="1.6" cy="9.0" r="1.05" fill="#5c6290"/><circle cx="5.1" cy="9.0" r="1.05" fill="#5c6290"/></svg><div class="cb cbon" style="left:800px;top:370px"></div><svg class="abs" style="left:800px;top:370px" width="18" height="18" viewBox="0 0 18 18"><path d="M4.3 9.2 L7.4 12.2 L13.8 5.8" fill="none" stroke="#fff" stroke-width="1.7"/></svg><div class="pt" style="left:825px;top:373px;font-size:12.6px">Email</div><div class="lockb" style="left:1071px;top:368px"></div><svg class="abs" style="left:1077px;top:374px" width="10" height="11" viewBox="0 0 10 11"><path d="M2.6 5 V3.3 A2.4 2.4 0 0 1 7.4 3.0" fill="none" stroke="#353d6e" stroke-width="1.6"/><rect x="0.6" y="4.8" width="8.8" height="6" rx="1" fill="#353d6e"/></svg><svg class="abs" style="left:788px;top:410px" width="7" height="11" viewBox="0 0 7 11"><circle cx="1.6" cy="1.6" r="1.05" fill="#5c6290"/><circle cx="5.1" cy="1.6" r="1.05" fill="#5c6290"/><circle cx="1.6" cy="5.3" r="1.05" fill="#5c6290"/><circle cx="5.1" cy="5.3" r="1.05" fill="#5c6290"/><circle cx="1.6" cy="9.0" r="1.05" fill="#5c6290"/><circle cx="5.1" cy="9.0" r="1.05" fill="#5c6290"/></svg><div class="cb cbon" style="left:800px;top:406px"></div><svg class="abs" style="left:800px;top:406px" width="18" height="18" viewBox="0 0 18 18"><path d="M4.3 9.2 L7.4 12.2 L13.8 5.8" fill="none" stroke="#fff" stroke-width="1.7"/></svg><div class="pt" style="left:825px;top:409px;font-size:12.6px">Phone Number</div><div class="lockb" style="left:1071px;top:404px"></div><svg class="abs" style="left:1077px;top:410px" width="10" height="11" viewBox="0 0 10 11"><path d="M2.6 5 V3.3 A2.4 2.4 0 0 1 7.4 3.0" fill="none" stroke="#353d6e" stroke-width="1.6"/><rect x="0.6" y="4.8" width="8.8" height="6" rx="1" fill="#353d6e"/></svg><svg class="abs" style="left:788px;top:446px" width="7" height="11" viewBox="0 0 7 11"><circle cx="1.6" cy="1.6" r="1.05" fill="#5c6290"/><circle cx="5.1" cy="1.6" r="1.05" fill="#5c6290"/><circle cx="1.6" cy="5.3" r="1.05" fill="#5c6290"/><circle cx="5.1" cy="5.3" r="1.05" fill="#5c6290"/><circle cx="1.6" cy="9.0" r="1.05" fill="#5c6290"/><circle cx="5.1" cy="9.0" r="1.05" fill="#5c6290"/></svg><div class="cb cbon" style="left:800px;top:442px"></div><svg class="abs" style="left:800px;top:442px" width="18" height="18" viewBox="0 0 18 18"><path d="M4.3 9.2 L7.4 12.2 L13.8 5.8" fill="none" stroke="#fff" stroke-width="1.7"/></svg><div class="pt" style="left:825px;top:445px;font-size:12.6px">Address</div><div class="lockb" style="left:1071px;top:440px"></div><svg class="abs" style="left:1077px;top:446px" width="10" height="11" viewBox="0 0 10 11"><path d="M2.6 5 V3.3 A2.4 2.4 0 0 1 7.4 3.0" fill="none" stroke="#353d6e" stroke-width="1.6"/><rect x="0.6" y="4.8" width="8.8" height="6" rx="1" fill="#353d6e"/></svg><svg class="abs" style="left:788px;top:482px" width="7" height="11" viewBox="0 0 7 11"><circle cx="1.6" cy="1.6" r="1.05" fill="#c9cbe0"/><circle cx="5.1" cy="1.6" r="1.05" fill="#c9cbe0"/><circle cx="1.6" cy="5.3" r="1.05" fill="#c9cbe0"/><circle cx="5.1" cy="5.3" r="1.05" fill="#c9cbe0"/><circle cx="1.6" cy="9.0" r="1.05" fill="#c9cbe0"/><circle cx="5.1" cy="9.0" r="1.05" fill="#c9cbe0"/></svg><div class="cb cboff" style="left:800px;top:478px"></div><div class="pt" style="left:825px;top:481px;font-size:12.6px">Date of Birth</div><div class="lockb" style="left:1071px;top:476px"></div><svg class="abs" style="left:1077px;top:482px" width="10" height="11" viewBox="0 0 10 11"><path d="M2.6 5 V3.3 A2.4 2.4 0 0 1 7.4 3.0" fill="none" stroke="#353d6e" stroke-width="1.6"/><rect x="0.6" y="4.8" width="8.8" height="6" rx="1" fill="#353d6e"/></svg><div class="abs" style="left:779px;top:506px;width:328px;height:13px;overflow:hidden"><div class="cb cboff" style="left:21px;top:8px"></div><div class="pt" style="left:46px;top:11px;font-size:12.6px">How did you hear about us?</div><div class="lockb" style="left:292px;top:6px"></div></div><svg class="abs" style="left:1092px;top:261px" width="10" height="11" viewBox="0 0 10 11"><path d="M2.6 5 V3.3 A2.4 2.4 0 0 1 7.4 3.0" fill="none" stroke="#353d6e" stroke-width="1.6"/><rect x="0.6" y="4.8" width="8.8" height="6" rx="1" fill="#353d6e"/></svg><div class="abs" style="left:1107px;top:288px;width:15px;height:231px;background:#fff"></div><svg class="abs" style="left:1109px;top:295px" width="11" height="8" viewBox="0 0 11 8"><path d="M1 7.5 L5.5 1.2 L10 7.5Z" fill="#7e7e7e"/></svg><svg class="abs" style="left:1109px;top:503px" width="11" height="8" viewBox="0 0 11 8"><path d="M1 0.5 L5.5 6.8 L10 0.5Z" fill="#7e7e7e"/></svg><div class="abs" style="left:1110px;top:311px;width:9px;height:74px;border-radius:4.5px;background:#858585"></div>

<div class="abs" style="left:793px;top:527px;width:315px;height:29px;border:1px solid #c6cbe9;border-radius:4px;background:#fff"></div>
<svg class="abs" style="left:868px;top:533px" width="14" height="15" viewBox="0 0 14 15"><path d="M6.9 2.6 A5.3 5.3 0 1 1 2.31 5.25" fill="none" stroke="#343c6a" stroke-width="1.4"/><path d="M4.6 0.9 L5.3 5.6 L0.9 4.4Z" fill="#343c6a"/></svg>
<div class="pt" style="left:886px;top:535px;font-size:12.8px;color:#343c6a;-webkit-text-stroke:0.35px #343c6a">Reset columns to default</div>
<div class="abs" style="left:793px;top:563px;width:315px;height:29px;border:1px solid #c6cbe9;border-radius:4px;background:#fff"></div>
<svg class="abs" style="left:886px;top:570px" width="14" height="14" viewBox="0 0 14 14"><circle cx="7.2" cy="7.3" r="6.4" fill="#343c6a"/><path d="M7.2 4.3 V10.3 M4.2 7.3 H10.2" stroke="#fff" stroke-width="1.6"/></svg>
<div class="pt" style="left:904px;top:571px;font-size:12.8px;color:#343c6a;-webkit-text-stroke:0.35px #343c6a">Add a new column</div>

<!-- arrow -->
<svg class="abs" style="left:1050px;top:20px" width="40" height="100" viewBox="0 0 40 100">
  <path d="M17.2 3.3 H24 V61 L34.1 55.2 L20.5 97 L6.9 55.2 L17.2 61Z" fill="#ff6100"/>
</svg>
</body></html>
